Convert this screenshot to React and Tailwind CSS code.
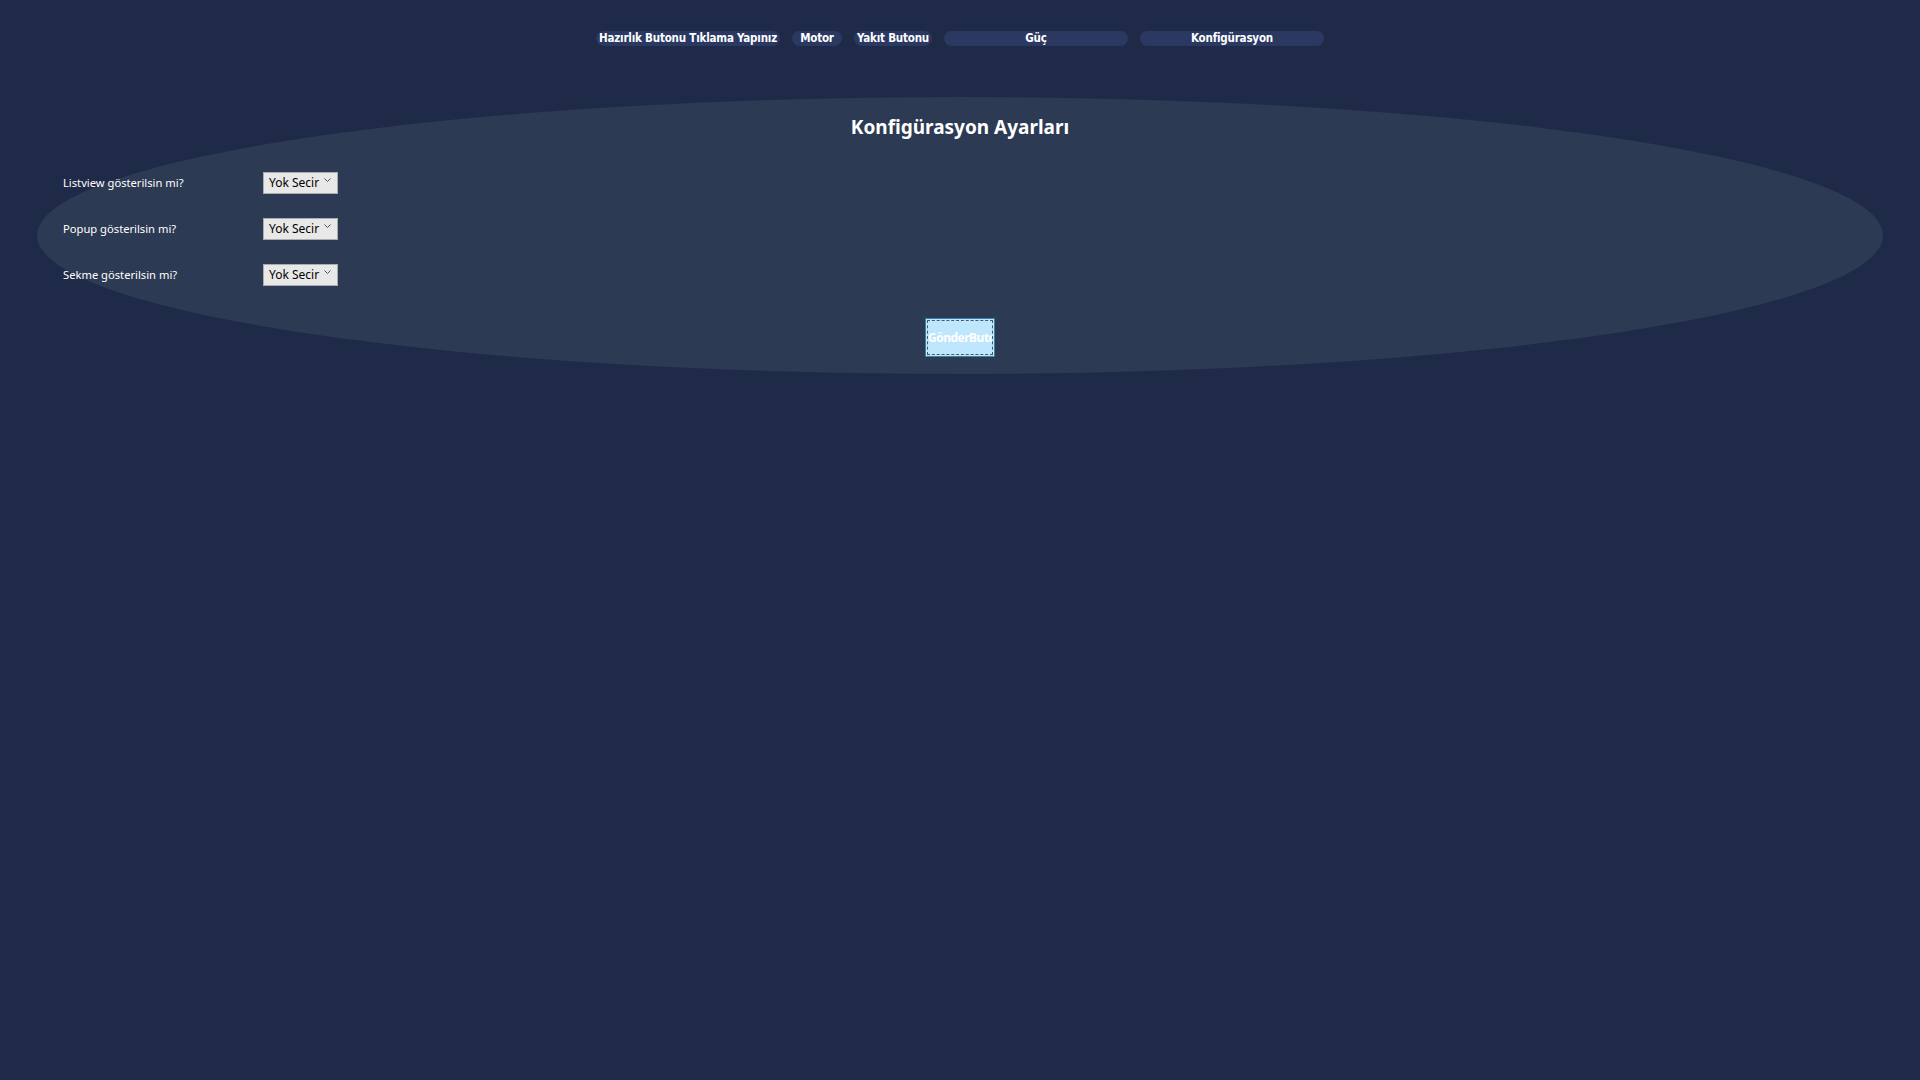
import React from 'react'

const tabs = [
  { label: 'Hazırlık Butonu Tıklama Yapınız', w: 'w-[184px]' },
  { label: 'Motor', w: 'w-[50px]' },
  { label: 'Yakıt Butonu', w: 'w-[78px]' },
  { label: 'Güç', w: 'w-[184px]' },
  { label: 'Konfigürasyon', w: 'w-[184px]' },
]

const rows = ['Listview gösterilsin mi?', 'Popup gösterilsin mi?', 'Sekme gösterilsin mi?']

function Chevron() {
  return (
    <svg width="7" height="5" viewBox="0 0 7 5" className="text-[#555] -mt-[5px]">
      <path d="M0.5 0.5 L3.5 3.5 L6.5 0.5" fill="none" stroke="currentColor" strokeWidth="1" />
    </svg>
  )
}

export default function App() {
  return (
    <div className="w-full min-h-screen bg-[#1f2a48] pt-[31px] pb-10" style={{ fontFamily: '"Noto Sans", "Open Sans", sans-serif' }}>
      {/* top tabs */}
      <div className="flex justify-center gap-[12px]">
        {tabs.map((t) => (
          <div
            key={t.label}
            className={`${t.w} h-[15px] rounded-full bg-[#2b3962] flex items-center justify-center text-white font-bold text-[11.5px] tracking-[-0.2px] leading-none whitespace-nowrap`}
            style={{ fontFamily: '"Liberation Sans Narrow", "DejaVu Sans Condensed", sans-serif' }}
          >
            {t.label}
          </div>
        ))}
      </div>

      {/* config panel */}
      <div className="mx-[37px] mt-[51px] h-[277px] rounded-[50%] bg-[#2d3a54] pt-[16px] flex flex-col">
        <h1 className="text-center text-white font-bold text-[19px] leading-[28px]">Konfigürasyon Ayarları</h1>

        <div className="mt-[31px] pl-[26px] flex flex-col gap-[24px]">
          {rows.map((r) => (
            <div key={r} className="flex items-center h-[22px]">
              <div className="w-[200px] text-white text-[11.2px]">{r}</div>
              <div className="w-[75px] h-[22px] bg-[#e8e8e8] border border-[#acacac] flex items-center justify-between pl-[5px] pr-[6px] text-black text-[12px]">
                <span>Yok Secir</span>
                <Chevron />
              </div>
            </div>
          ))}
        </div>

        <div className="mt-[32px] flex justify-center">
          <button className="w-[70px] h-[39px] bg-[#bee6fd] border border-[#3c7fb1] p-[1px] overflow-hidden">
            <div className="w-full h-full border border-dashed border-[#4a5a66] flex items-center overflow-hidden">
              <span className="text-white font-bold text-[12px] tracking-[-0.5px] whitespace-nowrap">GönderButonu</span>
            </div>
          </button>
        </div>
      </div>
    </div>
  )
}
